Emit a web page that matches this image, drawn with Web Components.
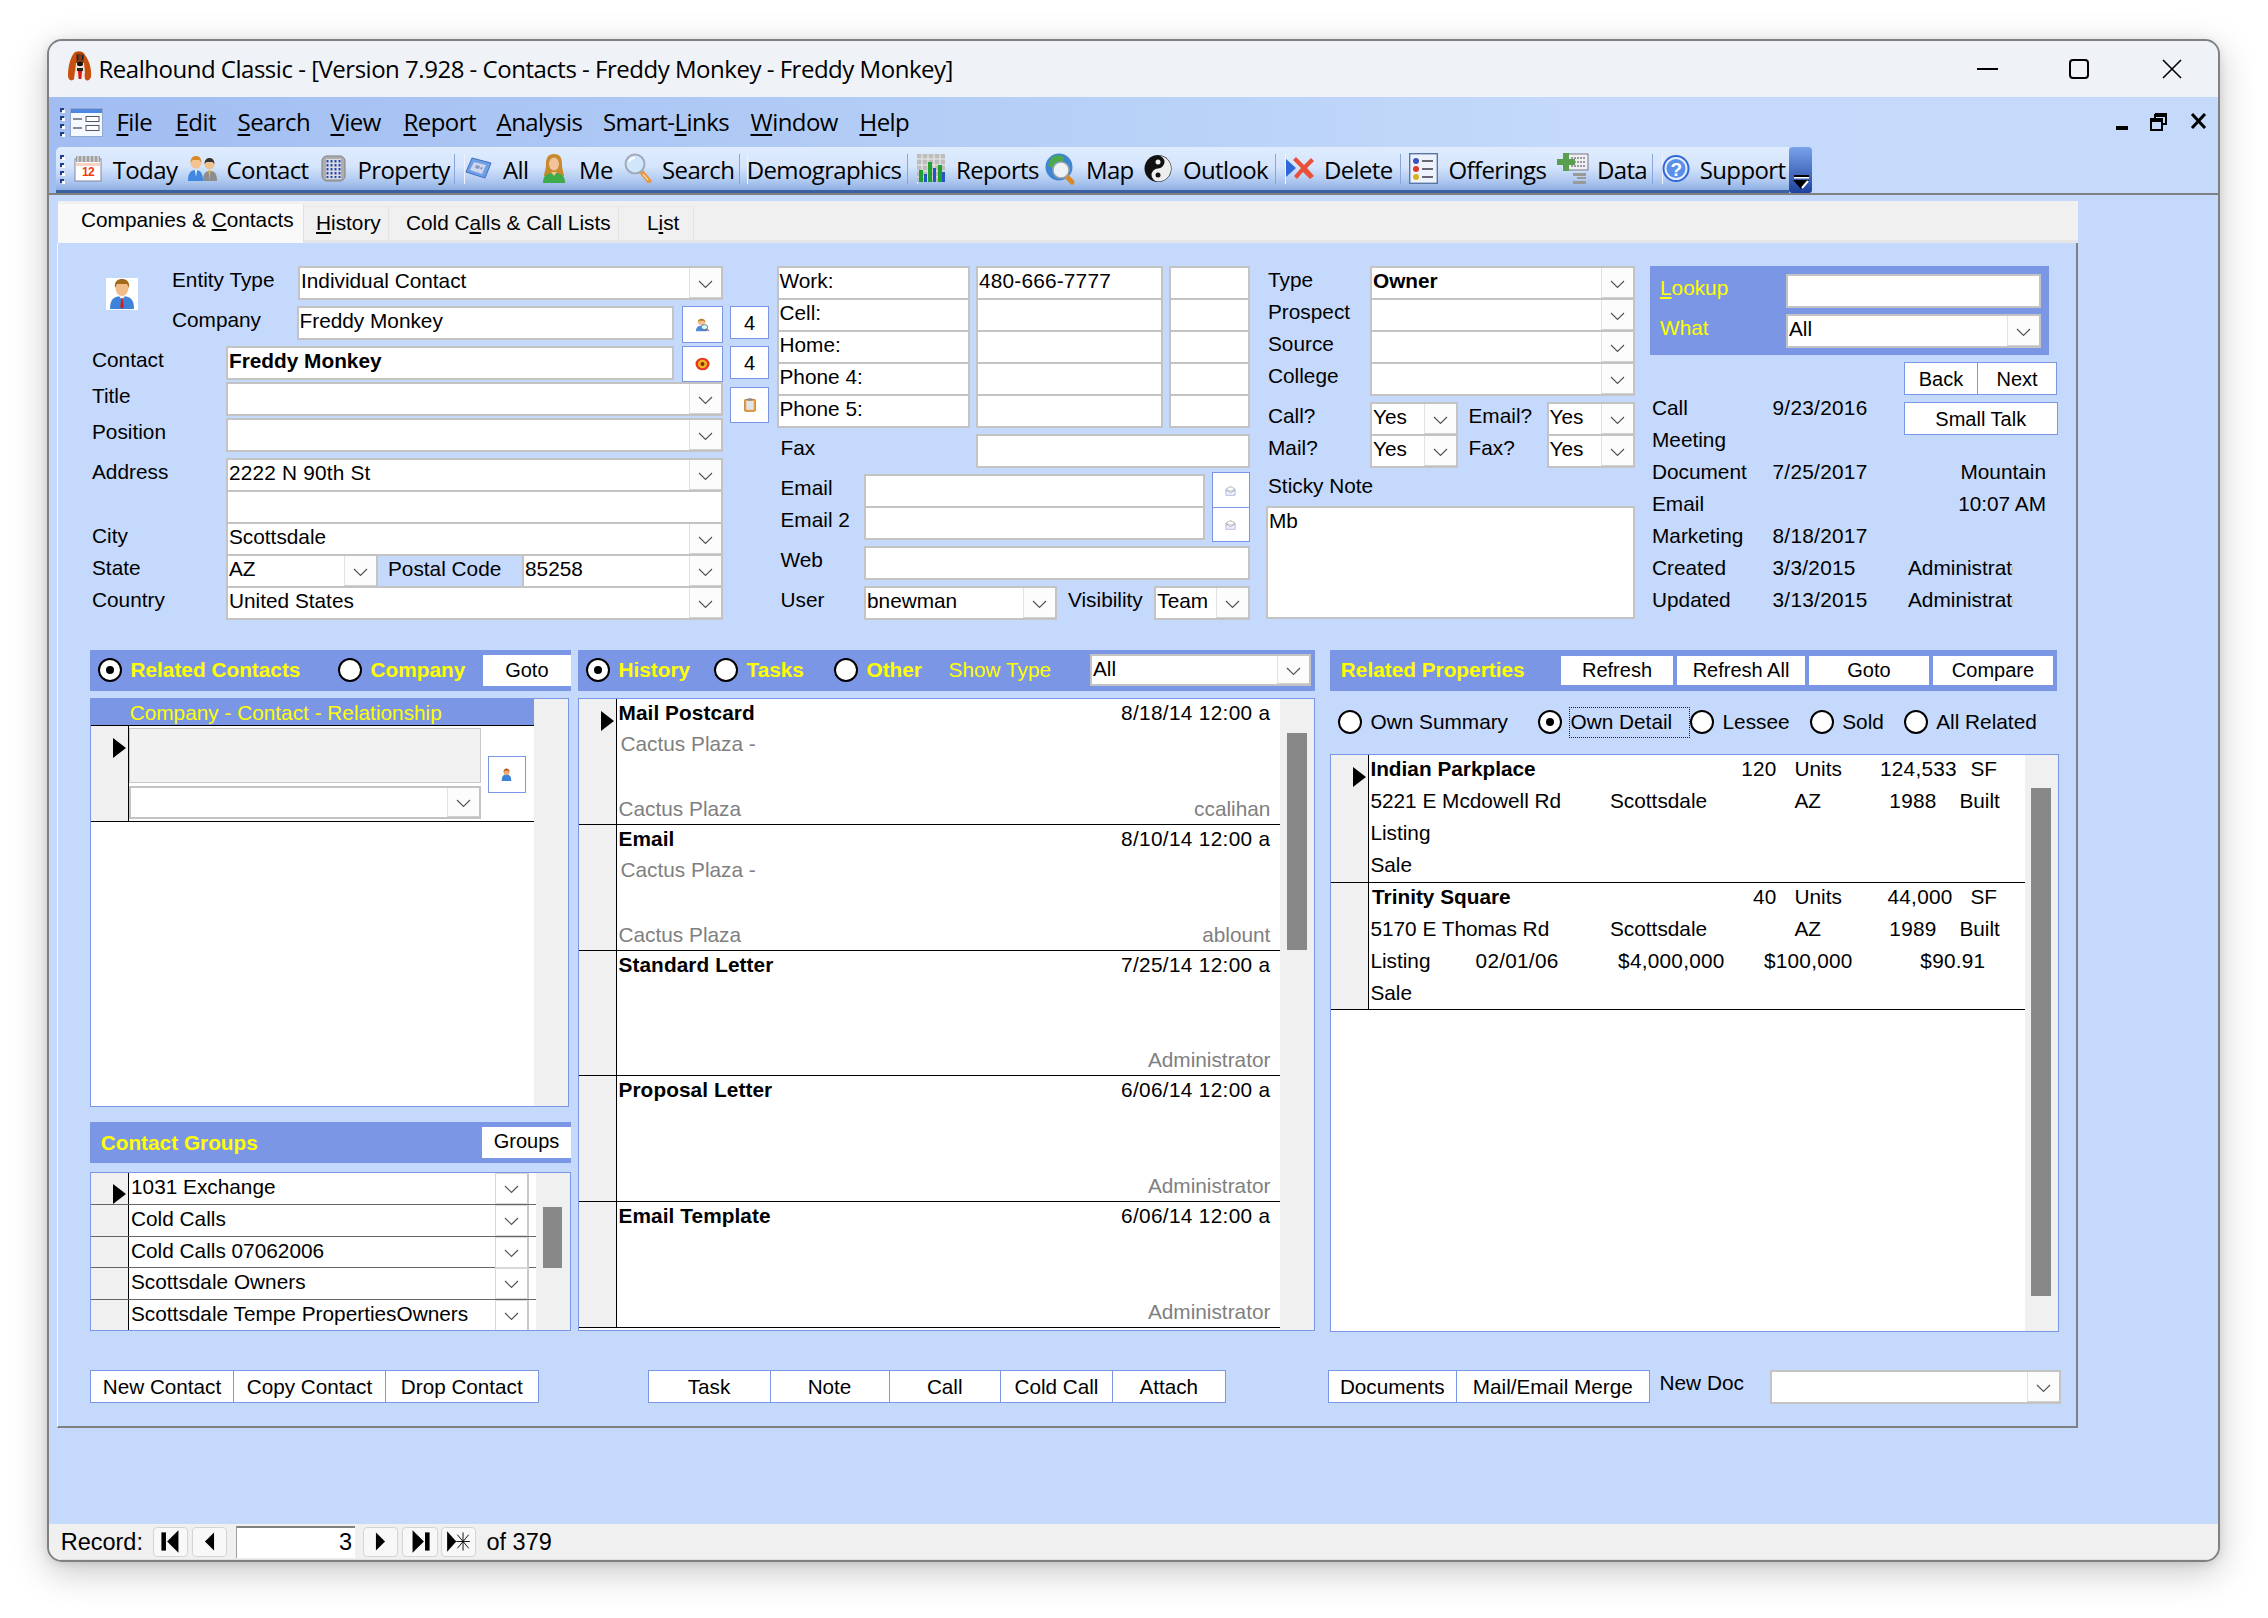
<!DOCTYPE html>
<html lang="en"><head><meta charset="utf-8"><title>Realhound Classic</title>
<style>html,body{margin:0;padding:0;background:#fff;overflow:hidden}body{width:2268px;height:1618px}</style>
</head><body>
<rh-window></rh-window>
<script>
const FORM="'Liberation Sans',Arial,sans-serif", UI="'Open Sans','Noto Sans',sans-serif";
const BLUE='#7b96e5', PAGE='#c5d9fd';
const base=`:host{display:block;font:20.8px/28px ${FORM};color:#000;box-sizing:border-box}*{box-sizing:border-box}
.r{display:flex;align-items:flex-start}.l{line-height:28px;white-space:nowrap;flex:none}.n{letter-spacing:.28px}`;
function def(name,css,html){customElements.define(name,class extends HTMLElement{
  connectedCallback(){if(this.shadowRoot)return;const s=this.attachShadow({mode:'open'});s.innerHTML='<style>'+base+css+'</style>'+html(this)}})}
const A=(h,n,d='')=>h.hasAttribute(n)?h.getAttribute(n):d;

const ICONS={
logo:`<svg width="25" height="32" viewBox="0 0 25 32"><path d="M8 1c5-2 9 0 10 3 4 5 7 14 6 22-1 3-4 5-6 2l-1-8H8l-1 8c-2 3-6 1-6-3C1 16 3 6 8 1z" fill="#c8500f"/><path d="M9 3c3-1 6-1 8 1l-1 8H9z" fill="#8a3a10"/><path d="M9 12l8 0 1 10-3 6h-4l-3-6z" fill="#f3e6d8"/><ellipse cx="13" cy="13" rx="3" ry="2.2" fill="#111"/><path d="M10 4h1.5v5H10zM15 4h1.5v5H15z" fill="#223"/><path d="M11 20h4l-.6 8h-2.8z" fill="#d81818"/><path d="M10 17h6v3h-6z" fill="#222"/></svg>`,
form:`<svg width="33" height="29" viewBox="0 0 33 29"><rect x=".5" y=".5" width="32" height="28" fill="#f4f8ff" stroke="#8fa8cf"/><rect x="1" y="1" width="31" height="4" fill="#4f86de"/><path d="M3 11h9M3 20h9" stroke="#667" stroke-width="1.4"/><rect x="16" y="8.5" width="13" height="5" fill="#fff" stroke="#556" /><rect x="16" y="17.5" width="13" height="5" fill="#fff" stroke="#556"/></svg>`,
cal:`<svg width="28" height="27" viewBox="0 0 28 27"><rect x="1" y="4" width="26" height="22" fill="#fff" stroke="#8488a8"/><rect x="2" y="1" width="24" height="6" fill="#a0a0a0"/><path d="M4 1v6M8 1v6M12 1v6M16 1v6M20 1v6M24 1v6" stroke="#eee"/><rect x="2" y="8" width="24" height="3" fill="#f7d3c0"/><text x="14" y="21" text-anchor="middle" font-family="Liberation Sans" font-weight="700" font-size="12" fill="#ef3d10">12</text></svg>`,
contact:`<svg width="29" height="27" viewBox="0 0 29 27"><path d="M15 26c0-7 2-10 7-10s7 3 7 10z" fill="#8d8d8d"/><circle cx="21.500" cy="9.500" r="5" fill="#f0c090"/><path d="M16.500 9c0-5 3-6 5-6s5 1 5 6l-2-2h-6z" fill="#333"/><path d="M20.500 15l1 11 1-11z" fill="#e4c018"/><path d="M0 26c0-7 2-11 7.500-11S15 19 15 26z" fill="#3f87df"/><circle cx="8" cy="8" r="5.500" fill="#f3c391"/><path d="M2.500 8c0-6 3-7 5.500-7s5.500 1 5.500 7l-2-3h-7z" fill="#d98a2a"/><path d="M7 15l1 7 1-7z" fill="#fff"/></svg>`,
building:`<svg width="25" height="27" viewBox="0 0 25 27"><rect x="1" y="1" width="23" height="25" rx="5" fill="#aeaeae" stroke="#808080"/><rect x="5" y="4" width="15" height="20" fill="#dcdce4"/><path d="M6.500 5v18M10.500 5v18M14.500 5v18M18.500 5v18" stroke="#2448a8" stroke-width="2" stroke-dasharray="2.500 1.500"/></svg>`,
all:`<svg width="28" height="24" viewBox="0 0 28 24"><path d="M8 2l19 5-6 15L2 16z" fill="#6f9fe6" stroke="#3f6fc0"/><path d="M10 6l12 3-4 9-12-4z" fill="#cfd5ea"/><path d="M12 9l4 1-1 3-4-1zM17 11l2 .5-1 2-2-.5z" fill="#8a97c0"/></svg>`,
me:`<svg width="24" height="30" viewBox="0 0 24 30"><path d="M12 1c6 0 8 4 8 10 0 6 2 9 2 12H2c0-3 2-6 2-12C4 5 6 1 12 1z" fill="#c98a2c"/><ellipse cx="12" cy="11" rx="5" ry="6.500" fill="#f2c39a"/><path d="M1 30c0-7 3-10 11-10s11 3 11 10z" fill="#3eaa4a"/><path d="M9 19l3 4 3-4z" fill="#f2c39a"/></svg>`,
search:`<svg width="29" height="30" viewBox="0 0 29 30"><path d="M16 17l9 11" stroke="#e59a45" stroke-width="5" stroke-linecap="round"/><path d="M19 21l5 6" stroke="#fff" stroke-width="1"/><circle cx="11" cy="11" r="9.500" fill="#cfe6fb" stroke="#a3a9b8" stroke-width="2"/><path d="M5 9c1-3 3-4 6-4" stroke="#fff" stroke-width="2" fill="none"/></svg>`,
chart:`<svg width="28" height="28" viewBox="0 0 28 28"><rect width="28" height="28" fill="#bdbdbd"/><path d="M0 5h28M0 11h28M0 17h28M0 23h28M5 0v28M11 0v28M17 0v28M23 0v28" stroke="#eee"/><rect x="2" y="16" width="4" height="12" fill="#20a030"/><rect x="7" y="20" width="3" height="8" fill="#2456c8"/><rect x="11" y="8" width="4" height="20" fill="#20a030"/><rect x="16" y="14" width="3" height="14" fill="#2456c8"/><rect x="21" y="11" width="4" height="17" fill="#20a030"/><rect x="25" y="18" width="3" height="10" fill="#2456c8"/></svg>`,
map:`<svg width="32" height="33" viewBox="0 0 32 31"><circle cx="14" cy="14" r="13.500" fill="#3f85d0"/><path d="M6 5c5-4 11-3 13 0l-2 6-6-2-3 6-5-2z" fill="#4ea84c"/><path d="M19 21l8 8" stroke="#d88a2a" stroke-width="5" stroke-linecap="round"/><circle cx="16" cy="17" r="8" fill="#eef2f6" stroke="#9aa4ad" stroke-width="1.500"/></svg>`,
yin:`<svg width="28" height="29" viewBox="0 0 28 28"><circle cx="14" cy="14" r="13.500" fill="#111"/><path d="M14 1a13 13 0 0 1 0 26 6.500 6.500 0 0 1 0-13 6.500 6.500 0 0 0 0-13z" fill="#eee"/><circle cx="14" cy="7.500" r="2.500" fill="#eee"/><circle cx="14" cy="20.500" r="2.500" fill="#111"/></svg>`,
del:`<svg width="30" height="25" viewBox="0 0 30 25"><path d="M1 3l10 9-10 9z" fill="#2e67d6"/><path d="M11 1l8 8 7-7 3 3-7 7 7 8-4 3-7-7-6 7-3-3 7-8-8-8z" fill="#e8503a"/></svg>`,
offer:`<svg width="29" height="31" viewBox="0 0 29 31"><rect x=".7" y=".7" width="27.600" height="29.600" fill="#eef3fb" stroke="#5877a8" stroke-width="1.400"/><circle cx="7" cy="8" r="3" fill="#3a52c8"/><circle cx="7" cy="16" r="3" fill="#dc3a2a"/><circle cx="7" cy="24" r="3" fill="#d8b020"/><path d="M13 8h11M13 16h11M13 24h11" stroke="#667" stroke-width="2"/></svg>`,
data:`<svg width="33" height="31" viewBox="0 0 33 31"><rect x="12" y="1" width="20" height="16" fill="#f0f0f0" stroke="#778"/><path d="M15 5h15M15 9h15M15 13h15" stroke="#99a" stroke-dasharray="2 1" stroke-width="2"/><path d="M7 0h6v6h6v6h-6v6H7v-6H1V6h6z" fill="#58a04e"/><path d="M17 20h13v3H17zM21 24h9v2h-9zM17 28h13v3H17z" fill="#999"/></svg>`,
help:`<svg width="28" height="29" viewBox="0 0 28 28"><circle cx="14" cy="14" r="13.500" fill="#2f68d8"/><circle cx="14" cy="14" r="10.500" fill="#5a90ea" stroke="#e6eefc" stroke-width="2"/><text x="14" y="21" text-anchor="middle" font-family="Liberation Sans" font-weight="700" font-size="19" fill="#fff">?</text></svg>`,
person:`<svg width="32" height="32" viewBox="0 0 32 32"><rect width="32" height="32" fill="#fff"/><path d="M4 31c0-10 4-13 12-13s12 3 12 13z" fill="#3d84d8"/><path d="M13 18l3 4 3-4z" fill="#fff"/><path d="M15.300 20h1.400l1 9-1.700 2-1.700-2z" fill="#d02020"/><ellipse cx="16" cy="10" rx="6.500" ry="8" fill="#f3bd8a"/><path d="M9 10c-1-7 3-9 7-9s8 2 7 9l-2-4H11z" fill="#a06a1a"/></svg>`,
sperson:`<svg width="15" height="14" viewBox="0 0 16 20" preserveAspectRatio="none"><path d="M1 19c0-6 2-8 6-8s6 2 6 8z" fill="#4c8ad8"/><circle cx="7" cy="6" r="4" fill="#f2c092"/><path d="M3 6c0-4 2-5 4-5s4 1 4 5l-2-2H5z" fill="#b8802a"/><circle cx="10" cy="13" r="3.500" fill="#dff" stroke="#567"/><path d="M12 15.500l3 3" stroke="#a66" stroke-width="1.500"/></svg>`,
target:`<svg width="15" height="14" viewBox="0 0 15 20" preserveAspectRatio="none"><ellipse cx="7.500" cy="10" rx="7" ry="9" fill="#e53a20"/><ellipse cx="7.500" cy="10" rx="4.500" ry="6" fill="#f0b820"/><ellipse cx="7.500" cy="10" rx="2" ry="3" fill="#8a2a10"/></svg>`,
clip:`<svg width="12" height="14" viewBox="0 0 13 19" preserveAspectRatio="none"><rect x=".7" y="2" width="11.600" height="16" rx="1" fill="#f3a33a" stroke="#b5701a"/><rect x="2.500" y="4" width="8" height="12" fill="#dfe4ec"/><rect x="4" y=".5" width="5" height="3" fill="#889"/></svg>`,
mail:`<svg width="11" height="11" viewBox="0 0 12 16" preserveAspectRatio="none"><path d="M1 6l5-4 5 4v9H1z" fill="#eef0fb" stroke="#a8aed8"/><path d="M3 3.500h6V8H3z" fill="#fff" stroke="#c8b87a" stroke-width=".6"/><path d="M1 7l5 4 5-4" fill="none" stroke="#8f96cf"/></svg>`,
face:`<svg width="11" height="13" viewBox="0 0 15 16" preserveAspectRatio="none"><path d="M1 16c0-6 2-8 6.500-8S14 10 14 16z" fill="#3d84d8"/><circle cx="7.500" cy="5" r="4" fill="#f2a772"/><path d="M3.500 5c0-3 2-4.500 4-4.500s4 1.500 4 4.500l-2-2h-4z" fill="#a85a1a"/></svg>`,
};
def('rh-icon',`:host{display:inline-flex;align-items:center;justify-content:center;line-height:0;flex:none}`,h=>ICONS[A(h,'name')]);

const chev=`<svg width="15" height="9" viewBox="0 0 15 9"><path d="M1 1l6.500 6.500L14 1" fill="none" stroke="#555" stroke-width="1.200"/></svg>`;
def('rh-field',`:host{flex:none;height:34px;background:#fff;border:2px solid #c3c3c3;display:flex;line-height:25px;white-space:nowrap;overflow:hidden}
.t{flex:1;min-width:0;padding-left:1px;overflow:hidden}.d{flex:none;width:32px;background:#fcfcfc;border-left:1px solid #e2e2e2;border-bottom:1px solid #d0d0d0;display:flex;align-items:center;justify-content:center;padding-top:3px}
:host([bold]) .t{font-weight:700}`,h=>{if(h.hasAttribute('w'))h.style.width=A(h,'w')+'px';if(h.hasAttribute('h'))h.style.height=A(h,'h')+'px';
 return `<div class="t"><slot></slot></div>`+(h.hasAttribute('combo')?`<div class="d">${chev}</div>`:'')});
def('rh-btn',`:host{flex:none;background:#fff;border:1px solid ${BLUE};display:flex;align-items:center;justify-content:center;white-space:nowrap;font-size:20px}
:host([plain]){border:0}`,h=>{h.style.width=A(h,'w')+'px';h.style.height=A(h,'h','33')+'px';if(h.hasAttribute('fs'))h.style.fontSize=A(h,'fs')+'px';return '<slot></slot>'});
def('rh-radio',`:host{display:inline-flex;align-items:center;flex:none;white-space:nowrap}
.c{flex:none;width:24px;height:24px;border:2px solid #000;border-radius:50%;background:#fff;display:flex;align-items:center;justify-content:center}
.c i{width:8px;height:8px;background:#000;border-radius:50%;display:block}
.lab{margin-left:8.500px}
:host([bold]) .lab{font-weight:700}:host([yellow]) .lab{color:#ff0}
:host([focus]) .lab{margin-left:6.500px;width:121px;height:31px;line-height:27px;border:1px dotted #222;padding-left:1px}`,h=>{if(h.hasAttribute('w'))h.style.width=A(h,'w')+'px';
 return `<span class="c">${h.hasAttribute('checked')?'<i></i>':''}</span><span class="lab"><slot></slot></span>`});
def('rh-bar',`:host{display:flex;align-items:center;background:${BLUE};flex:none}`,h=>{h.style.height=A(h,'h','40.500')+'px';if(h.hasAttribute('w'))h.style.width=A(h,'w')+'px';return '<slot></slot>'});
def('rh-list',`:host{display:flex;background:#fff;border:1px solid ${BLUE};overflow:hidden;flex:none}
.m{flex:1;min-width:0;overflow:hidden}.s{flex:none;background:#f0f0f0;position:relative}.s i{display:block;background:#888;position:absolute}`,h=>{
 h.style.width=A(h,'w')+'px';h.style.height=A(h,'h')+'px';
 const th=A(h,'th');return `<div class="m"><slot></slot></div><div class="s" style="width:${A(h,'track')}px">${th?`<i style="left:${A(h,'tl')}px;top:${A(h,'tt')}px;width:${A(h,'tw')}px;height:${th}px"></i>`:''}</div>`});
const tri=`width:0;height:0;border-left:13px solid #000;border-top:10.500px solid transparent;border-bottom:10.500px solid transparent;display:block;flex:none`;
def('rh-sel',`:host{flex:none;width:38px;background:#f0f0f0;border-right:1px solid #000;display:flex;justify-content:flex-end;padding-right:2px}i{${tri}}`,h=>h.hasAttribute('on')?`<i style="margin-top:${A(h,'off','12')}px"></i>`:'');
def('rh-hist-row',`:host{display:flex;height:125.750px;border-bottom:1px solid #000;overflow:hidden}
.b{flex:1;display:grid;grid-template-columns:1fr auto;grid-template-rows:28px 34px 1fr 30px;padding:0 9.600px 0 1.500px;align-items:center;white-space:nowrap}
.ti{font-weight:700;letter-spacing:.08px}.dt{letter-spacing:.32px}.g{color:#808080}.sub{grid-column:1/3;padding-left:2px}.foot{grid-row:4}`,h=>`<rh-sel ${h.hasAttribute('on')?'on':''}></rh-sel><div class="b"><span class="ti">${A(h,'t')}</span><span class="dt">${A(h,'date')}</span><span class="g sub">${A(h,'sub')}</span><span class="g foot">${A(h,'foot')}</span><span class="g foot" style="justify-self:end">${A(h,'user')}</span></div>`);
def('rh-prop-row',`:host{display:flex;height:127.600px;border-bottom:1px solid #000;overflow:hidden}.b{flex:1;margin-top:-2px}`,h=>`<rh-sel ${h.hasAttribute('on')?'on':''}></rh-sel><div class="b"><slot></slot></div>`);
def('rh-group-row',`:host{display:flex;height:31.750px;border-bottom:1px solid #666;overflow:visible}
.t{flex:none;width:366px;padding-left:2px;line-height:27px;white-space:nowrap}.d{flex:none;width:34px;height:31px;background:#fff;border:1px solid #d8d8d8;border-right:2px solid #c8c8c8;display:flex;align-items:center;justify-content:center;padding-top:2px}`,h=>`<rh-sel ${h.hasAttribute('on')?'on off="11"':''}></rh-sel><div class="t"><slot></slot></div><div class="d">${chev}</div>`);

def('rh-titlebar',`:host{display:flex;align-items:center;height:56px;background:#eff3f8;flex:none}
.t{font:24px/32px ${UI};letter-spacing:-.485px;margin-left:7px;white-space:nowrap}.w{margin-left:auto;display:flex;align-items:center;margin-right:36px;color:#000}
svg{display:block}`,()=>`<rh-icon name="logo" style="margin-left:17.500px;margin-top:-4px"></rh-icon><span class="t">Realhound Classic - [Version 7.928 - Contacts - Freddy Monkey - Freddy Monkey]</span>
<div class="w"><svg width="21" height="20" viewBox="0 0 21 20"><path d="M0 10h21" stroke="#000" stroke-width="2"/></svg><svg style="margin-left:71px" width="20" height="20" viewBox="0 0 20 20"><rect x="1" y="1" width="18" height="18" rx="3" fill="none" stroke="#000" stroke-width="2"/></svg><svg style="margin-left:73px" width="20" height="20" viewBox="0 0 20 20"><path d="M1 1l18 18M19 1L1 19" stroke="#000" stroke-width="1.600"/></svg></div>`);
const grip=`<svg width="6" height="30" viewBox="0 0 6 30">${[1,9,17,25].map(y=>`<rect x="0" y="${y}" width="4" height="4" fill="#24408a"/><rect x="2" y="${y+2}" width="3" height="3" fill="#fff"/>`).join('')}</svg>`;
def('rh-menubar',`:host{display:flex;align-items:center;height:50px;flex:none;background:linear-gradient(90deg,#a1bdf2 0,#b5cff6 45%,#c4d9fb 70%,#c5d9fb 100%);font:24px/32px ${UI};letter-spacing:-.55px}
.m{flex:none;white-space:nowrap}u{text-underline-offset:3px}.w{margin-left:auto;margin-right:11px;display:flex;align-items:flex-start}`,()=>{
 const it=[['<u>F</u>ile',59],['<u>E</u>dit',62],['<u>S</u>earch',93],['<u>V</u>iew',73],['<u>R</u>eport',93],['<u>A</u>nalysis',106.500],['Smart-<u>L</u>inks',147.500],['<u>W</u>indow',109],['<u>H</u>elp',60]];
 return `<span style="margin-left:11px;line-height:0">${grip}</span><rh-icon name="form" style="margin-left:4px"></rh-icon><div style="width:13.500px"></div>`+it.map(([t,w])=>`<span class="m" style="width:${w}px">${t}</span>`).join('')+
 `<div class="w"><svg width="12" height="18" viewBox="0 0 12 18"><rect y="13" width="12" height="4" fill="#000"/></svg><svg style="margin-left:22px" width="17" height="18" viewBox="0 0 17 18"><path d="M5 1h11v10h-3M5 1v4M5 3h11" fill="none" stroke="#000" stroke-width="2"/><rect x="1" y="6" width="11" height="11" fill="none" stroke="#000" stroke-width="2"/><path d="M1 8h11" stroke="#000" stroke-width="2"/></svg><svg style="margin-left:23px" width="17" height="16" viewBox="0 0 17 16"><path d="M2 1l13 14M15 1L2 15" stroke="#000" stroke-width="3"/></svg></div>`});
def('rh-tool',`:host{display:flex;align-items:center;flex:none;height:44px;font:24px/32px ${UI};letter-spacing:-.62px;white-space:nowrap}.i{flex:none;display:flex;align-items:center;margin-top:-2px}.x{padding-top:2px}`,h=>{h.style.width=A(h,'w')+'px';
 return h.hasAttribute('icon')?`<div class="i" style="width:${A(h,'iw')}px"><rh-icon name="${A(h,'icon')}"></rh-icon></div><div class="x"><slot></slot></div>`:'<div class="x"><slot></slot></div>'});
def('rh-sep',`:host{flex:none;height:30px;border-left:1px solid #8aa5d8;box-shadow:1px 0 0 #eef4ff;display:block}`,h=>{h.style.width=A(h,'w')+'px';return ''});
def('rh-toolbar',`:host{display:flex;height:48px;flex:none;background:linear-gradient(90deg,#a1bdf2 0,#b5cff6 45%,#c4d9fb 70%,#c5d9fb 100%);border-bottom:2px solid #808080}
.tb{display:flex;align-items:center;margin-left:7px;width:1733px;height:46px;border-radius:5px 0 0 0;border-bottom:3px solid #3a62a2;background:linear-gradient(180deg,#dfecfe 0,#d5e5fc 45%,#b8cff3 72%,#8fb0e4 100%);padding-top:1px}
.ch{flex:none;width:23px;height:46px;background:linear-gradient(180deg,#7aa2ea,#1e429e);border-radius:4px 4px 3px 3px;display:flex;flex-direction:column;align-items:center;justify-content:flex-end;padding:0 0 4px}
.g{margin-left:4px;margin-right:8px;line-height:0;flex:none}`,()=>`<div class="tb"><span class="g">${grip}</span>
<rh-tool w="114" iw="38.700" icon="cal">Today</rh-tool><rh-tool w="133" iw="38.600" icon="contact">Contact</rh-tool><rh-tool w="132.500" iw="36.500" icon="building">Property</rh-tool><rh-sep w="10.500"></rh-sep>
<rh-tool w="77.700" iw="39" icon="all">All</rh-tool><rh-tool w="82.300" iw="37.300" icon="me">Me</rh-tool><rh-tool w="115.500" iw="38" icon="search">Search</rh-tool><rh-sep w="7.200"></rh-sep>
<rh-tool w="159.900">Demographics</rh-tool><rh-sep w="10.400"></rh-sep><rh-tool w="127.800" iw="39" icon="chart">Reports</rh-tool><rh-tool w="99.200" iw="41.200" icon="map">Map</rh-tool><rh-tool w="131" iw="39" icon="yin">Outlook</rh-tool><rh-sep w="9.700"></rh-sep>
<rh-tool w="115.300" iw="39.300" icon="del">Delete</rh-tool><rh-sep w="9"></rh-sep><rh-tool w="147" iw="39.600" icon="offer">Offerings</rh-tool><rh-tool w="96" iw="41" icon="data">Data</rh-tool><rh-sep w="9.600"></rh-sep><rh-tool w="127.400" iw="38.200" icon="help">Support</rh-tool></div>
<div class="ch"><svg width="16" height="14" viewBox="0 0 16 14"><rect x="1" y="0" width="15" height="2" fill="#000"/><rect x="1" y="2" width="15" height="1.500" fill="#fff"/><path d="M0 5h16l-8 9z" fill="#000"/><path d="M9 13l6-7" stroke="#fff" stroke-width="2"/></svg></div>`);
def('rh-tabs',`:host{display:flex;align-items:flex-end;height:42px;background:#f0f0f0;border-bottom:3px solid #e6e6e6;flex:none;width:2020px}u{text-underline-offset:2px}
.t{height:34px;line-height:31px;white-space:nowrap;border-right:1px solid #e3e3e3;border-top:1px solid #e8e8e8;flex:none}
.a{height:39px;line-height:32px;background:#f9f9f9;border:0;border-right:1px solid #e0e0e0;margin-bottom:-3px;position:relative}`,()=>`<div class="t a" style="width:246px;padding-left:23px">Companies &amp; <u>C</u>ontacts</div><div class="t" style="width:85px;padding-left:12px"><u>H</u>istory</div><div class="t" style="width:230px;padding-left:17px">Cold C<u>a</u>lls &amp; Call Lists</div><div class="t" style="width:75px;padding-left:28px">L<u>i</u>st</div>`);

/* --- top of the form --- */
def('rh-contact-panel',``,()=>`
<div class="r" style="height:112px">
 <div style="width:82px;padding:12px 0 0 16px"><rh-icon name="person"></rh-icon></div>
 <div>
  <div class="r" style="height:40px"><div class="l" style="width:126px">Entity Type</div><rh-field w="424.500" combo>Individual Contact</rh-field></div>
  <div class="r" style="height:40px"><div class="l" style="width:124.500px">Company</div><rh-field w="377.500">Freddy Monkey</rh-field><rh-btn w="41" h="37" style="margin-left:8px"><rh-icon name="sperson"></rh-icon></rh-btn><rh-btn w="39" style="margin-left:7px">4</rh-btn></div>
 </div>
</div>
<div style="padding-left:2px;margin-top:-32px">
 <div class="r" style="height:36px"><div class="l" style="width:134px">Contact</div><rh-field w="448" bold>Freddy Monkey</rh-field><rh-btn w="41" h="36" style="margin-left:8px"><rh-icon name="target"></rh-icon></rh-btn><rh-btn w="39" style="margin-left:7px">4</rh-btn></div>
 <div class="r" style="height:36px"><div class="l" style="width:134px">Title</div><rh-field w="496.500" combo></rh-field><rh-btn w="39" h="36" style="margin:5px 0 0 7.500px"><rh-icon name="clip"></rh-icon></rh-btn></div>
 <div class="r" style="height:40px"><div class="l" style="width:134px">Position</div><rh-field w="496.500" combo></rh-field></div>
 <div class="r" style="height:32px"><div class="l" style="width:134px">Address</div><rh-field w="496.500" combo class="n" style="letter-spacing:.2px">2222 N 90th St</rh-field></div>
 <div class="r" style="height:32px"><div class="l" style="width:134px"></div><rh-field w="496.500"></rh-field></div>
 <div class="r" style="height:32px"><div class="l" style="width:134px">City</div><rh-field w="496.500" combo>Scottsdale</rh-field></div>
 <div class="r" style="height:32px"><div class="l" style="width:134px">State</div><rh-field w="152" combo>AZ</rh-field><div class="l" style="width:144px;height:34px;padding-left:10px;border-top:2px solid #c3c3c3;border-bottom:2px solid #c3c3c3;line-height:25px">Postal Code</div><rh-field w="200.500" combo>85258</rh-field></div>
 <div class="r" style="height:32px"><div class="l" style="width:134px">Country</div><rh-field w="496.500" combo>United States</rh-field></div>
</div>`);
def('rh-phone-panel',`.ph{display:flex;height:32px;gap:6px}`,()=>{
 const ph=['Work:','Cell:','Home:','Phone 4:','Phone 5:'];
 return ph.map((p,i)=>`<div class="ph"><rh-field w="193.500">${p}</rh-field><rh-field w="186.700" style="letter-spacing:.2px">${i==0?'480-666-7777':''}</rh-field><rh-field w="81.700"></rh-field></div>`).join('')+`
 <div class="r" style="height:40px;margin-top:8px"><div class="l" style="width:199.500px;padding-left:4px">Fax</div><rh-field w="274"></rh-field></div>
 <div class="r" style="height:32px"><div class="l" style="width:87.500px;padding-left:4px">Email</div><rh-field w="340.500"></rh-field><rh-btn w="37.500" h="37" style="margin:-2px 0 0 7.500px"><rh-icon name="mail"></rh-icon></rh-btn></div>
 <div class="r" style="height:40px"><div class="l" style="width:87.500px;padding-left:4px">Email 2</div><rh-field w="340.500"></rh-field><rh-btn w="37.500" h="35" style="margin:1px 0 0 7.500px"><rh-icon name="mail"></rh-icon></rh-btn></div>
 <div class="r" style="height:40px"><div class="l" style="width:87.500px;padding-left:4px">Web</div><rh-field w="386"></rh-field></div>
 <div class="r"><div class="l" style="width:87.500px;padding-left:4px">User</div><rh-field w="192.500" combo>bnewman</rh-field><div class="l" style="width:97.800px;padding-left:11.500px">Visibility</div><rh-field w="96" combo>Team</rh-field></div>`});
def('rh-prefs-panel',``,()=>`
 ${[['Type','Owner',1],['Prospect'],['Source'],['College']].map(([l,v,b])=>`<div class="r" style="height:32px"><div class="l" style="width:104px;padding-left:2px">${l}</div><rh-field w="264.700" combo ${b?'bold':''}>${v||''}</rh-field></div>`).join('')}
 <div class="r" style="height:32px;margin-top:8px"><div class="l" style="width:104px;padding-left:2px">Call?</div><rh-field w="88" combo>Yes</rh-field><div class="l" style="width:88.600px;padding-left:10.500px">Email?</div><rh-field w="88" combo>Yes</rh-field></div>
 <div class="r" style="height:38px"><div class="l" style="width:104px;padding-left:2px">Mail?</div><rh-field w="88" combo>Yes</rh-field><div class="l" style="width:88.600px;padding-left:10.500px">Fax?</div><rh-field w="88" combo>Yes</rh-field></div>
 <div class="l" style="height:34px;padding-left:2px">Sticky Note</div>
 <rh-field w="368.700" h="113">Mb</rh-field>`);
def('rh-lookup-panel',`.p{background:${BLUE};width:399px;height:89px;padding:8px 8px 0 10px;color:#ff0}.p u{text-underline-offset:2px}
.i{display:grid;grid-template-columns:120.500px 135.500px auto;height:32px;line-height:32px;padding-left:2px;white-space:nowrap}.x{width:104.600px;overflow:hidden}.m{width:138px;text-align:right}`,()=>`
 <div class="p"><div class="r" style="height:40px"><div class="l" style="width:126px"><u>L</u>ookup</div><rh-field w="255"></rh-field></div>
 <div class="r"><div class="l" style="width:126px">What</div><rh-field w="255" combo>All</rh-field></div></div>
 <div class="r" style="height:101px">
  <div style="width:254px;padding-top:37px"><div class="i"><span>Call</span><span class="n">9/23/2016</span></div><div class="i"><span>Meeting</span></div></div>
  <div style="padding-top:7px"><div class="r"><rh-btn w="74">Back</rh-btn><rh-btn w="80" style="margin-left:-1px">Next</rh-btn></div><rh-btn w="153.500" style="margin-top:7px">Small Talk</rh-btn></div>
 </div>
 <div class="i"><span>Document</span><span class="n">7/25/2017</span><span class="m">Mountain</span></div>
 <div class="i"><span>Email</span><span></span><span class="m">10:07 AM</span></div>
 <div class="i"><span>Marketing</span><span class="n">8/18/2017</span></div>
 <div class="i"><span>Created</span><span class="n">3/3/2015</span><span class="x">Administrator</span></div>
 <div class="i"><span>Updated</span><span class="n">3/13/2015</span><span class="x">Administrator</span></div>`);

/* --- middle panels --- */
def('rh-related-panel',`.hd{height:27px;background:${BLUE};color:#ff0;padding-left:38.700px;line-height:27px;border-bottom:1px solid #000}
.row{display:flex;height:96px;border-bottom:1px solid #000}.g{height:55px;width:352px;background:#f2f2f2;border:1px solid #c8c8c8;margin-top:2px}`,()=>`
 <rh-bar w="481"><rh-radio w="240" checked bold yellow style="margin-left:8px">Related Contacts</rh-radio><rh-radio w="144.700" bold yellow>Company</rh-radio><rh-btn plain w="88.300" h="31.500">Goto</rh-btn></rh-bar>
 <rh-list w="478.700" h="408.500" track="34" style="margin-top:7.500px">
  <div class="hd">Company - Contact - Relationship</div>
  <div class="row"><rh-sel on off="12"></rh-sel><div><div class="g"></div><rh-field w="352" h="33" combo style="margin-top:3px"></rh-field></div><rh-btn w="37.700" h="37" style="margin:30px 0 0 7px"><rh-icon name="face"></rh-icon></rh-btn></div>
 </rh-list>
 <rh-bar w="481" style="margin-top:15.500px"><span style="margin-left:10.700px;width:381.300px;font-weight:700;color:#ff0;white-space:nowrap;padding-top:2px">Contact Groups</span><rh-btn plain w="89" h="30.500" style="padding-bottom:3px">Groups</rh-btn></rh-bar>
 <rh-list w="480.700" h="159.400" track="34" tl="7" tt="34" tw="19" th="61" style="margin-top:9.500px">
  <rh-group-row on>1031 Exchange</rh-group-row><rh-group-row>Cold Calls</rh-group-row><rh-group-row>Cold Calls 07062006</rh-group-row><rh-group-row>Scottsdale Owners</rh-group-row><rh-group-row>Scottsdale Tempe PropertiesOwners</rh-group-row>
 </rh-list>`);
def('rh-history-panel',``,()=>`
 <rh-bar w="737"><rh-radio w="128" checked bold yellow style="margin-left:8px">History</rh-radio><rh-radio w="120" bold yellow>Tasks</rh-radio><rh-radio w="114.600" bold yellow>Other</rh-radio><span style="width:141.400px;color:#ff0;white-space:nowrap">Show Type</span><rh-field w="220.700" h="32" combo>All</rh-field></rh-bar>
 <rh-list w="737" h="632.500" track="34" tl="7" tt="34" tw="20" th="217" style="margin-top:7.500px">
  <rh-hist-row on t="Mail Postcard" date="8/18/14 12:00 a" sub="Cactus Plaza -" foot="Cactus Plaza" user="ccalihan"></rh-hist-row>
  <rh-hist-row t="Email" date="8/10/14 12:00 a" sub="Cactus Plaza -" foot="Cactus Plaza" user="ablount"></rh-hist-row>
  <rh-hist-row t="Standard Letter" date="7/25/14 12:00 a" user="Administrator"></rh-hist-row>
  <rh-hist-row t="Proposal Letter" date="6/06/14 12:00 a" user="Administrator"></rh-hist-row>
  <rh-hist-row t="Email Template" date="6/06/14 12:00 a" user="Administrator"></rh-hist-row>
 </rh-list>`);
function line(cells){let prev=1369;return '<div class="ln">'+cells.map(([t,a,b,al,bd])=>{const s=`<span style="margin-left:${(a-prev).toFixed(1)}px;width:${(b-a).toFixed(1)}px;text-align:${al||'left'};${bd?'font-weight:700;':''}${al=='right'||/^\d\d\//.test(t)?'letter-spacing:.25px;':''}">${t}</span>`;prev=b;return s}).join('')+'</div>'}
def('rh-properties-panel',`.rad{display:flex;align-items:center;height:63.500px;padding-left:8px}
.ln{display:flex;height:32px;line-height:31px;white-space:nowrap}.ln span{flex:none;overflow:visible}`,()=>`
 <rh-bar w="727"><span style="margin-left:10.800px;width:220.200px;font-weight:700;color:#ff0;white-space:nowrap">Related Properties</span><rh-btn plain w="112" h="29">Refresh</rh-btn><rh-btn plain w="128" h="29" style="margin-left:4px">Refresh All</rh-btn><rh-btn plain w="120" h="29" style="margin-left:4px">Goto</rh-btn><rh-btn plain w="120" h="29" style="margin-left:4px">Compare</rh-btn></rh-bar>
 <div class="rad"><rh-radio w="200">Own Summary</rh-radio><rh-radio w="152" checked focus>Own Detail</rh-radio><rh-radio w="119.700">Lessee</rh-radio><rh-radio w="94">Sold</rh-radio><rh-radio>All Related</rh-radio></div>
 <rh-list w="728.700" h="578" track="33" tl="6" tt="33" tw="20" th="508">
  <rh-prop-row on>
   ${line([['Indian Parkplace',1370.4,1700,'left',1],['120',1700,1776.6,'right'],['Units',1794.5,1880],['124,533',1880,1952.6,'right'],['SF',1970.5,2010]])}
   ${line([['5221 E Mcdowell Rd',1370.4,1610],['Scottsdale',1610,1794.5],['AZ',1794.5,1880],['1988',1880,1936.6,'right'],['Built',1959.4,2010]])}
   ${line([['Listing',1370.4,1470]])}${line([['Sale',1370.4,1470]])}
  </rh-prop-row>
  <rh-prop-row>
   ${line([['Trinity Square',1372,1700,'left',1],['40',1700,1776.6,'right'],['Units',1794.5,1880],['44,000',1880,1952.6,'right'],['SF',1970.5,2010]])}
   ${line([['5170 E Thomas Rd',1370.4,1610],['Scottsdale',1610,1794.5],['AZ',1794.5,1880],['1989',1880,1936.6,'right'],['Built',1959.4,2010]])}
   ${line([['Listing',1370.4,1475.6],['02/01/06',1475.6,1600],['$4,000,000',1600,1724.7,'right'],['$100,000',1740,1852.7,'right'],['$90.91',1900,1985.5,'right']])}
   ${line([['Sale',1370.4,1470]])}
  </rh-prop-row>
 </rh-list>`);
def('rh-action-bar',`:host{display:flex;align-items:flex-start;height:33px}.g{display:flex;flex:none}.g rh-btn{margin-left:-1px}.g rh-btn:first-child{margin-left:0}`,()=>`
 <div class="g"><rh-btn fs="20.700" w="144">New Contact</rh-btn><rh-btn fs="20.700" w="153">Copy Contact</rh-btn><rh-btn fs="20.700" w="153.500">Drop Contact</rh-btn></div>
 <div class="g" style="margin-left:109px"><rh-btn fs="20.700" w="123">Task</rh-btn><rh-btn fs="20.700" w="120">Note</rh-btn><rh-btn fs="20.700" w="112.500">Call</rh-btn><rh-btn fs="20.700" w="113">Cold Call</rh-btn><rh-btn fs="20.700" w="113.500">Attach</rh-btn></div>
 <div class="g" style="margin-left:102px"><rh-btn fs="20.700" w="129.500">Documents</rh-btn><rh-btn fs="20.700" w="193.500">Mail/Email Merge</rh-btn></div>
 <div class="l" style="margin-left:10px;width:110px;line-height:26px">New Doc</div><rh-field w="291" combo></rh-field>`);
def('rh-form',`:host{width:2020.500px;height:1185px;margin-left:8px;background:${PAGE};border-left:1px solid #f4f7ff;border-right:2px solid #808080;border-bottom:2px solid #808080;padding:23px 0 0 32px;flex:none}
.top{display:grid;grid-template-columns:686.500px 489.500px 384px 410px;height:352px}
.mid{display:grid;grid-template-columns:488px 752px 730px;height:682px;margin-top:32px}`,()=>`
 <div class="top"><rh-contact-panel></rh-contact-panel><rh-phone-panel></rh-phone-panel><rh-prefs-panel></rh-prefs-panel><rh-lookup-panel></rh-lookup-panel></div>
 <div class="mid"><rh-related-panel></rh-related-panel><rh-history-panel></rh-history-panel><rh-properties-panel></rh-properties-panel></div>
 <rh-action-bar style="margin-top:38px"></rh-action-bar>`);
const nav=(d)=>`<rh-nav><svg width="25" height="25" viewBox="0 0 22 22">${d}</svg></rh-nav>`;
def('rh-nav',`:host{flex:none;width:35.500px;height:30px;background:#f8f8f8;border:1px solid #d4d4d4;border-radius:4px;display:flex;align-items:center;justify-content:center}`,()=>'<slot></slot>');
def('rh-status',`:host{display:flex;align-items:center;height:36px;background:#f0f0f0;border-bottom:1px solid #e0e0e0;font-size:23.500px;padding-left:11.700px;flex:none}
.in{flex:none;width:119px;height:32px;background:#fff;border-top:2px solid #808080;border-left:1px solid #a0a0a0;text-align:right;padding-right:3px;line-height:28px}`,()=>`
 <span style="width:92.300px">Record:</span>
 ${nav('<rect x="3" y="3" width="4" height="16"/><path d="M18 1v20L8 11z"/>')}<span style="width:3.500px"></span>${nav('<path d="M15 3v16L7 11z"/>')}
 <span style="width:8.500px"></span><div class="in">3</div><span style="width:8px"></span>
 ${nav('<path d="M7 3v16l8-8z"/>')}<span style="width:4px"></span>${nav('<path d="M4 1v20l10-10z"/><rect x="15" y="3" width="4" height="16"/>')}<span style="width:3px"></span>${nav('<path d="M1 2v18l8-9z"/><path d="M15 3v16M9 11h12M10 5l10 12M20 5L10 17" stroke="#000" stroke-width=".8"/>')}
 <span style="margin-left:10px">of 379</span>`);
def('rh-window',`:host{width:2173px;height:1523px;margin:39px 0 0 47px;border:2px solid #808080;border-radius:15px;background:${PAGE};display:flex;flex-direction:column;overflow:hidden;box-shadow:0 10px 36px rgba(0,0,0,.22),0 2px 8px rgba(0,0,0,.1)}
.w{flex:1;min-height:0;padding-top:6px}.w rh-tabs{margin-left:9px}`,()=>`<rh-titlebar></rh-titlebar><rh-menubar></rh-menubar><rh-toolbar></rh-toolbar><div class="w"><rh-tabs></rh-tabs><rh-form></rh-form></div><rh-status></rh-status>`);
</script>
</body></html>
